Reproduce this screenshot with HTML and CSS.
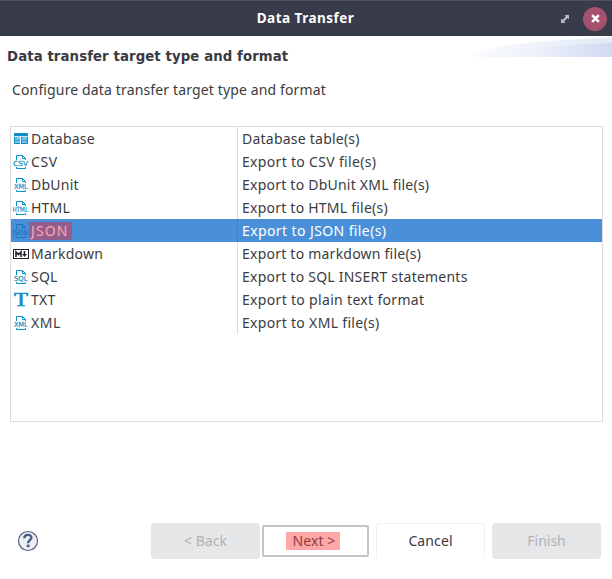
FILE: index.html
```html
<!DOCTYPE html>
<html lang="en">
<head>
<meta charset="utf-8">
<title>Data Transfer</title>
<link rel="stylesheet" href="styles.css">
</head>
<body>
<svg class="defs" aria-hidden="true">
  <symbol id="doc" viewBox="0 0 16 16">
    <path d="M3.5 6V1.5H9.5L12.5 4.5V6M9.5 1.5V4.5H12.5M3.5 13V14.5H12.5V13" fill="none" stroke="currentColor"/>
  </symbol>
</svg>
<div class="dialog">
  <header class="titlebar">
    <h1 class="window-title"><span>Data Transfer</span></h1>
    <div class="window-controls">
      <svg class="maximize" viewBox="0 0 8 8"><path d="M3.5 0H8V4.5L6.6 3.1L3.1 6.6L4.5 8H0V3.5L1.4 4.9L4.9 1.4Z" fill="#b9bbc1"/></svg>
      <button class="close" aria-label="Close"><svg viewBox="0 0 8 8"><path d="M1 1L7 7M7 1L1 7" stroke="#fff" stroke-width="2.2"/></svg></button>
    </div>
  </header>
  <section class="banner">
    <div class="intro">
      <h2 class="heading">Data transfer target type and format</h2>
      <p class="description">Configure data transfer target type and format</p>
    </div>
    <svg class="swoosh" viewBox="0 0 140 20">
      <defs><linearGradient id="sky"><stop offset="0" stop-color="#fafbfe"/><stop offset=".5" stop-color="#ebeff9"/><stop offset="1" stop-color="#d0daf3"/></linearGradient><linearGradient id="haze"><stop offset="0" stop-color="#fafbfe"/><stop offset="1" stop-color="#e2eaf7"/></linearGradient></defs>
      <path d="M0 20C14 7 72 4 140 0V20Z" fill="url(#haze)"/>
      <path d="M0 20C30 14 80 8 140 6V20Z" fill="url(#sky)"/>
    </svg>
  </section>
  <main class="table">
    <div class="row"><div class="cell type"><svg class="icon" viewBox="0 0 16 16"><rect x="1" y="2" width="14" height="11" rx="1" fill="#0c8fc9"/><path d="M2 6H7V12H2ZM9 6H14V12H9Z" fill="#6cc7ee"/><path d="M2 9.5H14" stroke="#2ba3da"/><path d="M1 5.5H15" stroke="#fff" stroke-width=".8"/><path d="M7.5 6V13" stroke="#fff"/></svg><span>Database</span></div><div class="cell"><span>Database table(s)</span></div></div>
    <div class="row"><div class="cell type"><svg class="icon" viewBox="0 0 16 16"><use href="#doc"/><text x="0" y="12" textLength="15" lengthAdjust="spacingAndGlyphs">CSV</text></svg><span class="wide">CSV</span></div><div class="cell"><span class="csv">Export to CSV file(s)</span></div></div>
    <div class="row"><div class="cell type"><svg class="icon" viewBox="0 0 16 16"><use href="#doc"/><text x="1" y="12" textLength="13.5" lengthAdjust="spacingAndGlyphs">XML</text></svg><span>DbUnit</span></div><div class="cell"><span>Export to DbUnit XML file(s)</span></div></div>
    <div class="row"><div class="cell type"><svg class="icon" viewBox="0 0 16 16"><use href="#doc"/><text x="-.5" y="12" textLength="15.5" lengthAdjust="spacingAndGlyphs">HTML</text></svg><span>HTML</span></div><div class="cell"><span>Export to HTML file(s)</span></div></div>
    <div class="row selected"><div class="cell type"><svg class="icon" viewBox="0 0 16 16"><use href="#doc"/><text x="-.5" y="12" textLength="15.5" lengthAdjust="spacingAndGlyphs">JSON</text></svg><span class="mark">JSON</span></div><div class="cell"><span class="json">Export to JSON file(s)</span></div></div>
    <div class="row"><div class="cell type"><svg class="icon markdown" viewBox="0 0 16 16"><rect x=".5" y="3.5" width="15" height="9" fill="#fff" stroke="#25222b"/><path d="M3 11V6L5.5 8.5L8 6V11M11.5 5V9" fill="none" stroke="#25222b" stroke-width="1.6"/><path d="M9 8H14L11.5 11Z" fill="#25222b"/></svg><span>Markdown</span></div><div class="cell"><span>Export to markdown file(s)</span></div></div>
    <div class="row"><div class="cell type"><svg class="icon" viewBox="0 0 16 16"><use href="#doc"/><text x="1" y="12" textLength="13.5" lengthAdjust="spacingAndGlyphs">SQL</text></svg><span>SQL</span></div><div class="cell"><span>Export to SQL INSERT statements</span></div></div>
    <div class="row"><div class="cell type"><svg class="icon" viewBox="0 0 16 16"><text class="serif" x="1" y="14" textLength="14" lengthAdjust="spacingAndGlyphs">T</text></svg><span>TXT</span></div><div class="cell"><span class="plain">Export to plain text format</span></div></div>
    <div class="row"><div class="cell type"><svg class="icon" viewBox="0 0 16 16"><use href="#doc"/><text x="1" y="12" textLength="13.5" lengthAdjust="spacingAndGlyphs">XML</text></svg><span class="wide">XML</span></div><div class="cell"><span class="plain">Export to XML file(s)</span></div></div>
  </main>
  <footer class="actions">
    <button class="help" aria-label="Help"><svg viewBox="0 0 22 22"><circle cx="11" cy="11" r="9.5" fill="#eeeff0" stroke="#526287" stroke-width="1.2"/><path d="M7.3 8.2C7.3 3.8 14.8 3.9 14.4 7.8C14.2 10 11.1 10 11.1 13.2" fill="none" stroke="#485b84" stroke-width="2.4"/><rect x="9.7" y="14.6" width="2.8" height="2.6" fill="#485b84"/></svg></button>
    <button class="button back" disabled>&lt; Back</button>
    <button class="button next"><span>Next &gt;</span></button>
    <button class="button cancel">Cancel</button>
    <button class="button finish" disabled>Finish</button>
  </footer>
</div>
</body>
</html>
```
FILE: styles.css
```css
* { box-sizing: border-box; }
body { margin: 0; background: #fff; color: #3a3b42; font: 14px/23px "Noto Sans", "Open Sans", sans-serif; }
button { margin: 0; padding: 0; border: 0; background: none; font: inherit; color: inherit; }
svg { display: block; }
.defs { position: absolute; width: 0; height: 0; }
.dialog { display: flex; flex-direction: column; width: 612px; height: 579px; }
.titlebar { display: grid; grid-template-columns: 1fr auto 1fr; align-items: center; height: 36px; background: #383b49; border-top: 1px solid #4e505d; }
.window-title { grid-column: 2; margin: 0 1px 0 0; color: #fff; font-size: 13.5px; font-weight: 700; letter-spacing: .48px; }
.window-controls { display: flex; align-items: center; justify-content: flex-end; gap: 14px; padding-right: 5px; }
.maximize { width: 8px; height: 8px; }
.close { display: grid; place-items: center; width: 24px; height: 24px; border-radius: 50%; background: #a5506f; }
.close svg { width: 9px; height: 9px; }
.banner { display: flex; justify-content: space-between; height: 90px; }
.intro { padding: 9px 0 0 7px; white-space: nowrap; }
.heading { margin: 0; font: 700 13.3px/24px "DejaVu Sans", sans-serif; letter-spacing: .09px; }
.description { margin: 9px 0 0 5px; letter-spacing: .14px; }
.swoosh { width: 140px; height: 20px; margin-top: 1px; }
.table { width: 593px; height: 296px; margin-left: 10px; border: 1px solid #dcdcdc; background: #fff; letter-spacing: .23px; }
.row { display: grid; grid-template-columns: 227px 1fr; height: 23px; }
.cell { display: flex; align-items: center; padding-left: 4px; white-space: nowrap; }
.type { padding-left: 2px; border-right: 1px solid #dcdcdc; gap: 2px; }
.wide { letter-spacing: .6px; }
.csv, .plain { letter-spacing: .32px; }
.json { letter-spacing: .4px; }
.icon { width: 16px; height: 16px; color: #0c8fc9; overflow: visible; letter-spacing: 0; }
.icon text { font: 400 7px "DejaVu Sans", sans-serif; fill: currentColor; stroke: currentColor; stroke-width: .2px; }
.icon .serif { font: 400 18px "Liberation Serif", serif; stroke-width: .6px; }
.selected { background: #4a90d9; color: #fff; }
.selected .type { border-color: #4281c4; }
.selected .icon { color: #1a75bc; }
.mark { margin-left: -2px; padding: 0 4px 0 2px; line-height: 18px; background: #935e8e; color: #ffa6ad; letter-spacing: 1.1px; }
.actions { display: flex; align-items: center; height: 36px; margin-top: 101px; padding-left: 17px; }
.help, .help svg { width: 22px; height: 22px; }
.button { width: 109px; height: 36px; border-radius: 4px; padding-bottom: 2px; white-space: nowrap; }
.button:disabled { background: #e6e7e8; color: #b1b3b6; }
.back { margin-left: 112px; }
.next { width: 107px; height: 32px; margin-left: 2px; padding: 0 5px 1px 0; border: 2px solid #c5c5c5; border-radius: 2px; letter-spacing: .1px; }
.next span { display: inline-block; padding: 0 5px 0 7px; line-height: 18px; background: #ffa6a6; color: #923c42; }
.cancel { margin-left: 7px; border: 1px solid #f1f1f1; border-bottom-color: #fff; letter-spacing: .1px; }
.finish { margin-left: 7px; }
```
